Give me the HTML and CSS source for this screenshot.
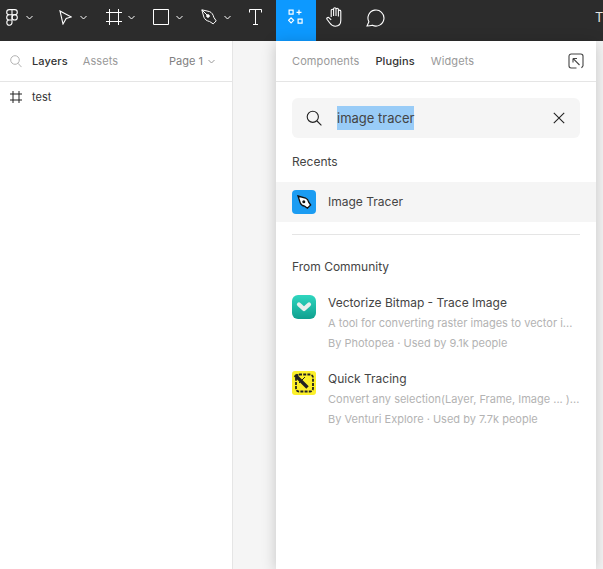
FILE: index.html
```html
<!DOCTYPE html>
<html lang="en">
<head>
<meta charset="utf-8">
<title>Figma plugins</title>
<link rel="stylesheet" href="styles.css">
</head>
<body>
<div class="app">
  <header class="toolbar">
    <div class="tool tool-logo">
      <svg class="ico" width="12" height="17" viewBox="0 0 12 17" fill="none" stroke="#fff" stroke-width="1.1"><path d="M6 .6H3.300a2.600 2.600 0 0 0 0 5.200H6zM6 .6h2.700a2.600 2.600 0 0 1 0 5.200H6zM6 5.800H3.300a2.600 2.600 0 0 0 0 5.200H6zM6 11H3.300a2.600 2.600 0 1 0 2.700 2.600z"/><circle cx="8.700" cy="8.400" r="2.600"/></svg>
      <svg class="chev" width="7" height="5" viewBox="0 0 7 5" fill="none" stroke="#fff"><path d="M.5 1 3.500 4l3-3"/></svg>
    </div>
    <div class="tool tool-move">
      <svg class="ico" width="13" height="15" viewBox="0 0 13 15" fill="none" stroke="#fff" stroke-width="1.100"><path d="M1 .9 12.300 7 7.200 8.500 4 14z"/></svg>
      <svg class="chev" width="7" height="5" viewBox="0 0 7 5" fill="none" stroke="#fff"><path d="M.5 1 3.500 4l3-3"/></svg>
    </div>
    <div class="tool tool-frame">
      <svg class="ico" width="16" height="16" viewBox="0 0 16 16" fill="none" stroke="#fff"><path d="M3.500 0v16M12.500 0v16M0 3.500h16M0 12.500h16"/></svg>
      <svg class="chev" width="7" height="5" viewBox="0 0 7 5" fill="none" stroke="#fff"><path d="M.5 1 3.500 4l3-3"/></svg>
    </div>
    <div class="tool tool-rect">
      <svg class="ico" width="16" height="16" viewBox="0 0 16 16" fill="none" stroke="#fff"><path d="M.5.5h15v15H.5z"/></svg>
      <svg class="chev" width="7" height="5" viewBox="0 0 7 5" fill="none" stroke="#fff"><path d="M.5 1 3.500 4l3-3"/></svg>
    </div>
    <div class="tool tool-pen">
      <svg class="ico" width="16" height="16" viewBox="0 0 16 16" fill="none" stroke="#fff" stroke-width="1"><path d="M.8.800 8.600 2.600c2.300 1 3.600 3 4.200 5.700l2.400 3.600-3 3-3.600-2.400c-2.800-.6-4.800-2-5.700-4.300z"/><path d="M1 1l5.400 5.400"/><circle cx="7" cy="7" r="1.300" fill="#fff"/></svg>
      <svg class="chev" width="7" height="5" viewBox="0 0 7 5" fill="none" stroke="#fff"><path d="M.5 1 3.500 4l3-3"/></svg>
    </div>
    <div class="tool tool-text">
      <svg class="ico" width="13" height="16" viewBox="0 0 13 16" fill="none" stroke="#fff"><path d="M.5 3.500V.5h12v3M6.500.5v15M4 15.500h5"/></svg>
    </div>
    <div class="tool tool-plugin">
      <svg class="ico" width="16" height="16" viewBox="0 0 16 16" fill="none" stroke="#fff" stroke-width="1.200"><path d="M1.100 1.100h4v4h-4zM11 .8v5M8.500 3.300h5M10.100 10.100h4v4h-4zM3.100 8.800l2.500 2.500-2.500 2.500-2.500-2.500z"/></svg>
    </div>
    <div class="tool tool-hand">
      <svg class="ico" width="18" height="20" viewBox="0 0 18 20" fill="none" stroke="#fff" stroke-width="1.100"><path d="M5.200 10V3.400a1.200 1.200 0 0 1 2.400 0V9M7.600 9V1.900a1.200 1.200 0 0 1 2.400 0V9M10 9V2.500a1.200 1.200 0 0 1 2.400 0V9.500M12.400 9.500V4.300a1.200 1.200 0 0 1 2.400 0v9.200c0 3.500-2.300 5.700-5.500 5.700-2.800 0-4.200-1.300-5.500-3.200L1 12.300c-.8-1.300 1-2.500 2.100-1.500l2.100 2"/></svg>
    </div>
    <div class="tool tool-comment">
      <svg class="ico" width="19" height="19" viewBox="0 0 19 19" fill="none" stroke="#fff" stroke-width="1.100"><path d="M1 18l1.900-4.200a8 8 0 1 1 3.500 3.400C4.800 17.700 2.900 18 1 18z"/></svg>
    </div>
    <div class="tool-title">T</div>
  </header>

  <div class="workspace">
    <aside class="layers">
      <div class="layers-head">
        <svg class="layers-search" width="12" height="13" viewBox="0 0 12 13" fill="none" stroke="#b3b3b3"><circle cx="5" cy="5" r="4.300"/><path d="m8 8.300 3.500 3.800"/></svg>
        <span class="tab tab-on">Layers</span>
        <span class="tab tab-off">Assets</span>
        <span class="page">Page 1</span>
        <svg class="page-chev" width="7" height="5" viewBox="0 0 7 5" fill="none" stroke="#999"><path d="M.5 1 3.500 4l3-3"/></svg>
      </div>
      <div class="layer-row">
        <svg width="12" height="12" viewBox="0 0 12 12" fill="none" stroke="#222"><path d="M3 0v12M9 0v12M0 3h12M0 9h12"/></svg>
        <span class="layer-name">test</span>
      </div>
    </aside>

    <main class="canvas">
      <section class="popup">
        <div class="popup-tabs">
          <span class="tab tab-off">Components</span>
          <span class="tab tab-on">Plugins</span>
          <span class="tab tab-off">Widgets</span>
          <svg class="popout" width="16" height="16" viewBox="0 0 16 16" fill="none" stroke="#444" stroke-width="1.100"><path d="M8.500 15H3.200A2.200 2.200 0 0 1 1 12.800V3.200A2.200 2.200 0 0 1 3.200 1h9.600A2.200 2.200 0 0 1 15 3.200v9.600l-1.500 2"/><path d="M5 5.500h4M5 5.500v4M5.200 5.700l6.300 6.300"/></svg>
        </div>
        <div class="search">
          <svg width="16" height="16" viewBox="0 0 16 16" fill="none" stroke="#222" stroke-width="1.100"><circle cx="6.800" cy="6.800" r="5.600"/><path d="m11 11 4.400 4.400"/></svg>
          <span class="search-text">image tracer</span>
          <svg class="search-x" width="12" height="12" viewBox="0 0 12 12" fill="none" stroke="#222" stroke-width="1.100"><path d="m.8.800 10.400 10.400M11.200.800.800 11.200"/></svg>
        </div>
        <h2 class="section-title">Recents</h2>
        <div class="recent">
          <svg class="plugin-icon" width="24" height="24" viewBox="0 0 24 24"><rect width="24" height="24" rx="4" fill="#1b9cf2"/><path d="M6 6 13.500 8c2 .8 2.800 2.200 3.200 4.200l2 2.800-3.300 3.200-2.800-2C10.500 15.800 9 15 8.300 13z" fill="#fff" stroke="#111" stroke-width="1.300"/><circle cx="11.800" cy="11.800" r="1.500" fill="#111"/></svg>
          <span class="plugin-name">Image Tracer</span>
        </div>
        <div class="divider"></div>
        <h2 class="section-title section-community">From Community</h2>
        <article class="plugin">
          <svg class="plugin-icon" width="24" height="24" viewBox="0 0 24 24"><defs><linearGradient id="vb" x1="0" y1="0" x2="0" y2="1"><stop offset="0" stop-color="#2fd6bf"/><stop offset="1" stop-color="#0fa08f"/></linearGradient></defs><rect width="24" height="24" rx="6" fill="url(#vb)"/><path d="M7 9.500 12 14l5-4.500" fill="none" stroke="#e9efed" stroke-width="4.200" stroke-linecap="round" stroke-linejoin="round"/></svg>
          <div class="plugin-body">
            <div class="plugin-name">Vectorize Bitmap - Trace Image</div>
            <div class="plugin-meta plugin-desc">A tool for converting raster images to vector i...</div>
            <div class="plugin-meta">By Photopea · Used by 9.1k people</div>
          </div>
        </article>
        <article class="plugin">
          <svg class="plugin-icon" width="24" height="24" viewBox="0 0 24 24"><rect width="24" height="24" rx="3" fill="#fcf02a"/><rect x="4" y="3.500" width="17" height="17" rx="3" fill="none" stroke="#222" stroke-width="1.800" stroke-dasharray="3 1.200"/><path d="M3 4 15.500 16.500" stroke="#222" stroke-width="3.400"/><path d="M7 12 13 6" stroke="#222"/></svg>
          <div class="plugin-body">
            <div class="plugin-name">Quick Tracing</div>
            <div class="plugin-meta plugin-desc">Convert any selection(Layer, Frame, Image ... )...</div>
            <div class="plugin-meta">By Venturi Explore · Used by 7.7k people</div>
          </div>
        </article>
      </section>
    </main>
  </div>
</div>
</body>
</html>
```

FILE: styles.css
```css
* { box-sizing: border-box; }
html, body { margin: 0; height: 100%; overflow: hidden; }
body { font-family: Inter, "Liberation Sans", sans-serif; font-size: 11px; color: #333; background: #fff; }

.app { height: 100%; display: flex; flex-direction: column; }

.toolbar { height: 41px; flex: none; display: flex; align-items: stretch; background: #2c2c2c; overflow: hidden; }
.tool { display: flex; align-items: center; flex: none; padding-bottom: 7px; }
.tool svg { display: block; }
.tool-logo { width: 59px; padding-left: 6px; }
.tool-logo .chev { margin-left: 8px; }
.tool-move { width: 47px; }
.tool-move .chev { margin-left: 8px; }
.tool-frame { width: 47px; }
.tool-frame .chev { margin-left: 6px; }
.tool-rect { width: 48px; }
.tool-rect .chev { margin-left: 7px; }
.tool-pen { width: 48px; }
.tool-pen .chev { margin-left: 7px; }
.tool-text { width: 27px; }
.tool-plugin { width: 40px; justify-content: center; background: #0d99ff; }
.tool-hand { width: 50px; padding-left: 10px; }
.tool-comment { width: 50px; }
.tool-title { margin-left: 179px; line-height: 34px; font-size: 13px; color: #e4e4e4; }

.workspace { flex: 1; min-height: 0; display: flex; }

.layers { width: 233px; flex: none; background: #fff; border-right: 1px solid #e5e5e5; }
.layers-head { height: 41px; display: flex; align-items: center; padding-left: 10px; border-bottom: 1px solid #e5e5e5; }
.layers-search { margin-right: 10px; }
.tab { font-size: 11px; line-height: 16px; letter-spacing: .01em; }
.tab-on { font-weight: 500; color: #333; }
.tab-off { color: #999; }
.layers-head .tab-off { margin-left: 15px; }
.page { margin-left: auto; color: #808080; }
.page-chev { margin: 0 17px 0 5px; }
.layer-row { height: 30px; display: flex; align-items: center; padding-left: 10px; }
.layer-name { margin-left: 10px; color: #333; }

.canvas { flex: 1; min-width: 0; background: #f5f5f5; padding-left: 43px; }

.popup { width: 320px; height: 100%; background: #fff; box-shadow: 0 2px 14px rgba(0, 0, 0, .2); }
.popup-tabs { height: 41px; display: flex; align-items: center; gap: 16px; padding: 0 12px 0 16px; border-bottom: 1px solid #e5e5e5; }
.popout { margin-left: auto; }
.search { height: 40px; margin: 16px 16px 0; padding: 0 15px 0 14px; display: flex; align-items: center; background: #f5f5f5; border-radius: 6px; }
.search-text { margin-left: 15px; line-height: 24px; font-size: 13px; color: #444; background: #99ccf7; }
.search-x { margin-left: auto; }

.section-title { margin: 16px 16px 0; font-size: 12px; line-height: 16px; font-weight: 400; color: #444; }
.section-community { margin-top: 24px; }

.recent { height: 40px; margin-top: 12px; padding: 0 16px; display: flex; align-items: center; gap: 12px; background: #f5f5f5; }
.divider { height: 1px; margin: 12px 16px 0; background: #e5e5e5; }

.plugin { display: flex; gap: 12px; padding: 0 16px; margin-top: 16px; }
.section-community + .plugin { margin-top: 18px; }
.plugin .plugin-icon { margin-top: 2px; }
.plugin-icon { flex: none; display: block; }
.plugin-body { min-width: 0; display: flex; flex-direction: column; }
.plugin-name { font-size: 12px; line-height: 20px; color: #444; white-space: nowrap; }
.plugin-meta { font-size: 11px; line-height: 20px; color: #b3b3b3; white-space: nowrap; }
```
